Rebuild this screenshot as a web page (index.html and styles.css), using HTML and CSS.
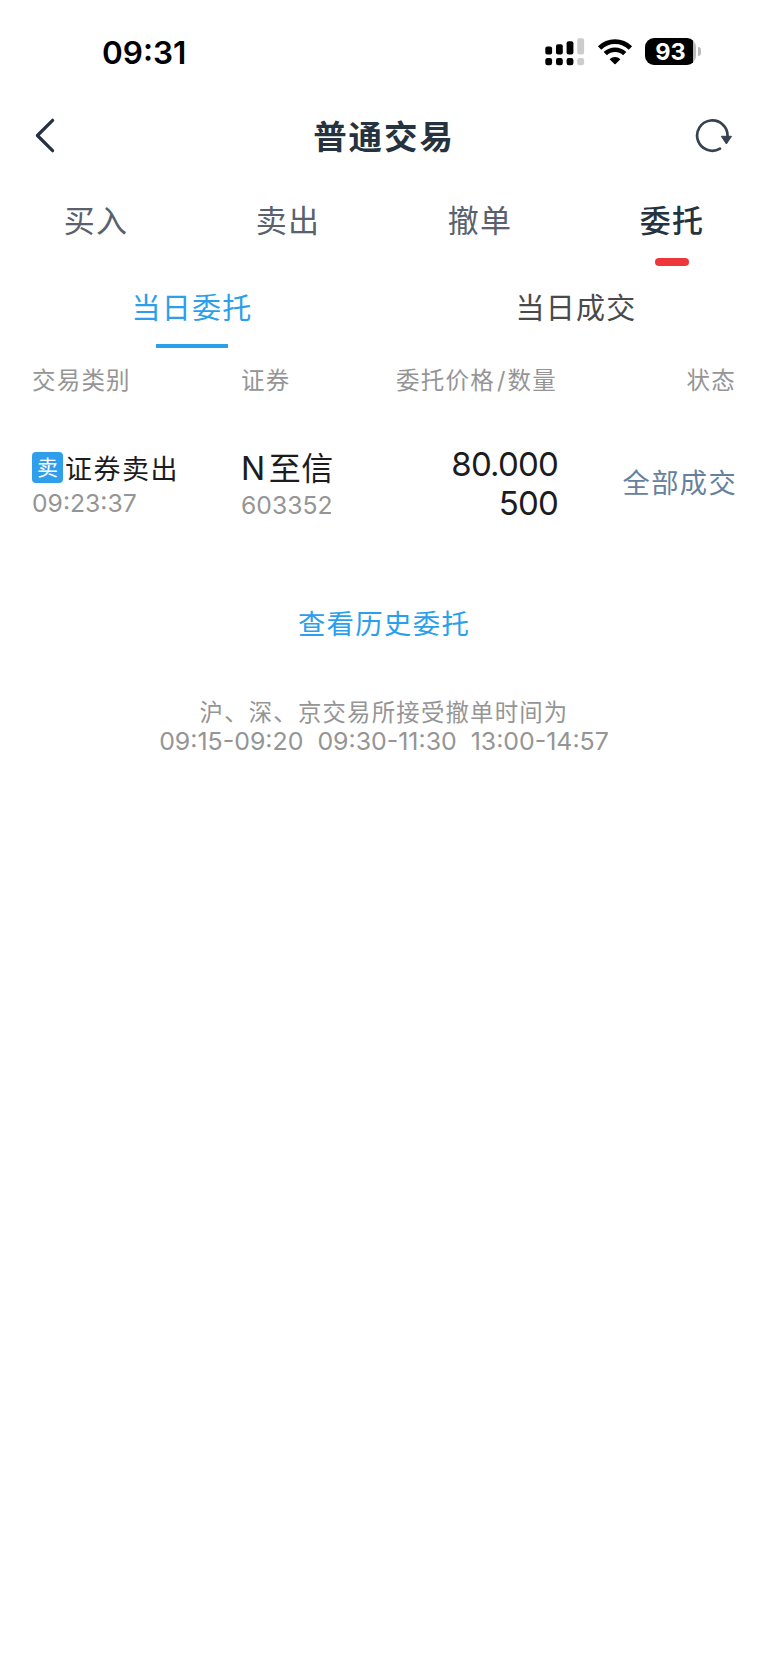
FILE: index.html
```html
<!DOCTYPE html>
<html lang="zh-CN">
<head>
    <meta charset="UTF-8">
    <meta name="viewport" content="width=device-width, initial-scale=1.0">
    <title>普通交易</title>
    <link rel="stylesheet" href="styles.css">
</head>
<body>
    <div class="status-bar">
        <span class="time">09:31</span>
        <div class="status-icons">
            <svg class="signal" width="40" height="28" viewBox="0 0 40 28">
                <rect x="0.3" y="8.6" width="6.8" height="8" rx="2"/>
                <rect x="11" y="6.2" width="6.8" height="10.4" rx="2"/>
                <rect x="21.6" y="3.2" width="6.8" height="13.4" rx="2"/>
                <rect x="32.3" y="0.2" width="6.8" height="16.4" rx="2" fill="#ccc"/>
                <rect x="0.3" y="20" width="6.8" height="7.2" rx="2.2"/>
                <rect x="11" y="20" width="6.8" height="7.2" rx="2.2"/>
                <rect x="21.6" y="20" width="6.8" height="7.2" rx="2.2"/>
                <rect x="32.3" y="20" width="6.8" height="7.2" rx="2.2" fill="#ccc"/>
            </svg>
            <svg class="wifi" width="36" height="26" viewBox="0 0 36 26">
                <path d="M2.6 9 A22 22 0 0 1 33.4 9" fill="none" stroke="#000" stroke-width="4.8"/>
                <path d="M8.3 14.6 A14 14 0 0 1 27.7 14.6" fill="none" stroke="#000" stroke-width="4.6"/>
                <path d="M12.6 20.2 A7.8 7.8 0 0 1 23.4 20.2 L18.6 25 Q18 25.6 17.4 25 Z"/>
            </svg>
            <div class="battery">
                <span class="battery-level">93</span>
            </div>
            <span class="battery-cap"></span>
        </div>
    </div>

    <div class="nav-bar">
        <svg class="back" width="20" height="36" viewBox="0 0 20 36">
            <path d="M17.6 2.3 L2.4 17.5 L17.6 32.7" fill="none" stroke="#253341" stroke-width="3.2" stroke-linecap="round" stroke-linejoin="round"/>
        </svg>
        <h1 class="title">普通交易</h1>
        <svg class="refresh" width="38" height="36" viewBox="0 0 38 36">
            <path d="M32.5 18.5 A15.2 15.2 0 1 0 25 30.7" fill="none" stroke="#36424f" stroke-width="2.7" stroke-linecap="round"/>
            <path d="M26.3 18.3 H36.5 L31.4 26 Z" fill="#36424f" stroke="#36424f" stroke-width="1" stroke-linejoin="round"/>
        </svg>
    </div>

    <div class="tabs">
        <div class="tab">买入</div>
        <div class="tab">卖出</div>
        <div class="tab">撤单</div>
        <div class="tab active">委托</div>
    </div>

    <div class="sub-tabs">
        <div class="sub-tab active">当日委托</div>
        <div class="sub-tab">当日成交</div>
    </div>

    <div class="row table-head">
        <span>交易类别</span>
        <span>证券</span>
        <span class="right">委托价格<span class="slash">/</span>数量</span>
        <span class="right">状态</span>
    </div>

    <div class="row order">
        <div class="kind">
            <div class="kind-name"><span class="badge">卖</span>证券卖出</div>
            <div class="sub-text">09:23:37</div>
        </div>
        <div class="stock">
            <div class="stock-name"><span class="prefix">N</span>至信</div>
            <div class="sub-text">603352</div>
        </div>
        <div class="amount">
            <div>80.000</div>
            <div>500</div>
        </div>
        <div class="state">全部成交</div>
    </div>

    <a class="history">查看历史委托</a>

    <div class="note">
        <p class="note-text">沪、深、京交易所接受撤单时间为</p>
        <p class="note-hours">09:15-09:20&nbsp; 09:30-11:30&nbsp; 13:00-14:57</p>
    </div>
</body>
</html>
```
FILE: styles.css
```css
* {
    box-sizing: border-box;
}

body {
    margin: 0;
    min-height: 1665px;
    background: #fff;
    color: #1c1c1e;
    font-family: Inter, "Noto Sans CJK SC", sans-serif;
}

.status-bar {
    display: flex;
    align-items: center;
    justify-content: space-between;
    height: 104px;
    padding: 0 67px 0 102px;
}

.time {
    padding-top: 2px;
    color: #000;
    font-size: 31.5px;
    font-weight: 600;
    line-height: 40px;
}

.status-icons {
    display: flex;
    align-items: center;
    margin-top: -1px;
}
.wifi {
    margin: 0 12px;
}

.battery {
    width: 51px;
    height: 27px;
    border-radius: 9px;
    background: linear-gradient(to right, #000 48px, #bbb 48px);
    text-align: center;
}
.battery-level {
    display: block;
    color: #fff;
    font-size: 23.5px;
    font-weight: 700;
    line-height: 28px;
}
.battery-cap {
    width: 3px;
    height: 9px;
    margin-left: 2px;
    border-radius: 0 3px 3px 0;
    background: #bbb;
}

.nav-bar {
    display: grid;
    grid-template-columns: 38px 1fr 38px;
    align-items: center;
    height: 64px;
    padding: 0 35px;
}
.title {
    margin: 0;
    padding-top: 2px;
    color: #253341;
    font-size: 33.5px;
    font-weight: 600;
    letter-spacing: 1.9px;
    line-height: 40px;
    text-align: center;
}

.tabs {
    display: flex;
    height: 104px;
    padding-top: 33px;
}
.tab {
    display: flex;
    flex: 1;
    flex-direction: column;
    align-items: center;
    color: #59616e;
    font-size: 31px;
    letter-spacing: 1.3px;
    line-height: 40px;
}
.tab.active {
    color: #253341;
    font-weight: 500;
}
.tab.active::after {
    content: "";
    width: 34px;
    height: 8px;
    margin-top: 17px;
    border-radius: 4px;
    background: #ee373b;
}

.sub-tabs {
    display: flex;
    height: 80px;
    padding-top: 17px;
}
.sub-tab {
    display: flex;
    flex: 1;
    flex-direction: column;
    align-items: center;
    color: #4a4a4a;
    font-size: 29px;
    letter-spacing: 1.2px;
    line-height: 40px;
}
.sub-tab.active {
    color: #2b9fec;
}
.sub-tab.active::after {
    content: "";
    width: 72px;
    height: 4px;
    margin-top: 15px;
    background: #2b9fec;
}

.row {
    display: grid;
    grid-template-columns: 209px 130px 186px 1fr;
    padding: 0 32px;
}
.right {
    text-align: right;
}

.table-head {
    padding-top: 13px;
    color: #959595;
    font-size: 23.5px;
    letter-spacing: 1.2px;
    line-height: 32px;
}
.slash {
    margin: 0 1px 0 2px;
}

.order {
    height: 145px;
    padding-top: 50px;
}
.kind-name {
    display: flex;
    align-items: center;
    gap: 2px;
    height: 40px;
    font-size: 27px;
    letter-spacing: 1.5px;
}
.badge {
    width: 31px;
    height: 31px;
    border-radius: 4px;
    background: #2f9fec;
    color: #fff;
    font-size: 21px;
    letter-spacing: 0;
    line-height: 31px;
    text-align: center;
}
.sub-text {
    color: #959595;
    font-size: 24.7px;
    line-height: 32px;
}
.stock-name {
    height: 42px;
    font-size: 32px;
    letter-spacing: 0.6px;
    line-height: 43px;
}
.prefix {
    margin-right: 3px;
}
.amount {
    margin: -2px -1px 0 0;
    font-size: 33px;
    letter-spacing: -0.8px;
    line-height: 39px;
    text-align: right;
}
.state {
    margin-right: -1px;
    padding-top: 17px;
    color: #66819e;
    font-size: 27.3px;
    letter-spacing: 1.3px;
    line-height: 40px;
    text-align: right;
}

.history {
    display: block;
    margin-top: 62px;
    color: #2b9fec;
    font-size: 27.4px;
    letter-spacing: 1.3px;
    line-height: 40px;
    text-align: center;
}

.note {
    margin-top: 54px;
    color: #959595;
    text-align: center;
}
.note p {
    margin: 0;
    line-height: 29px;
}
.note-text {
    font-size: 23.4px;
    letter-spacing: 1.2px;
}
.note-hours {
    font-size: 24.9px;
}
```
